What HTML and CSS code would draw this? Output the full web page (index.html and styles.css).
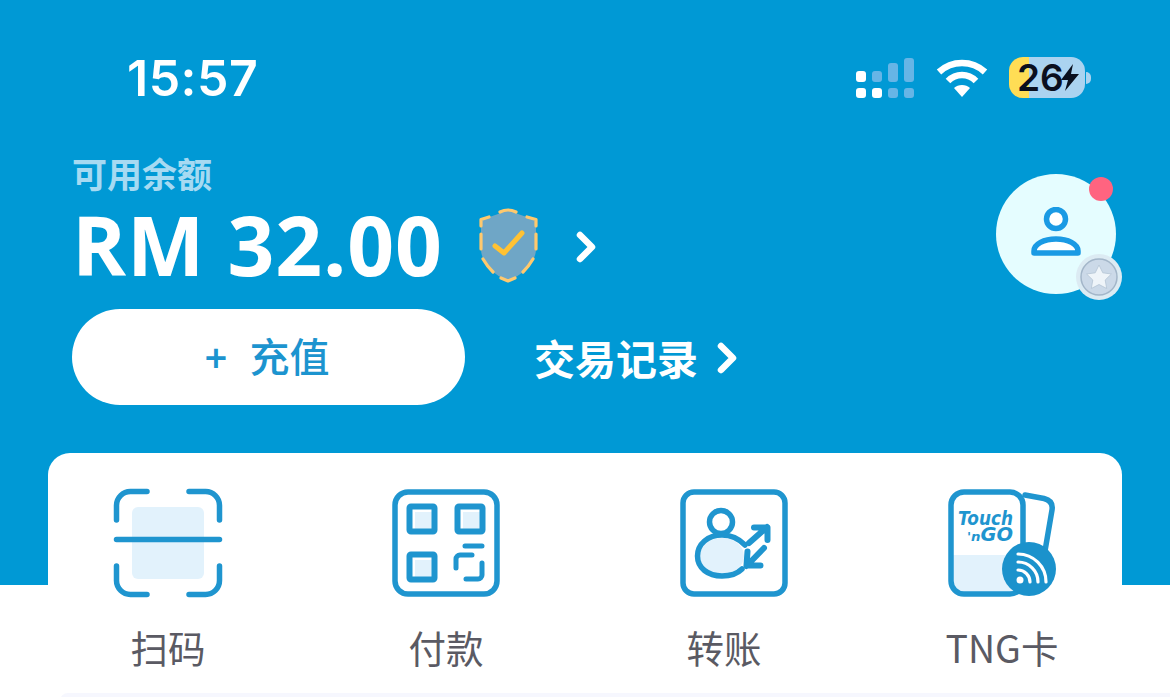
FILE: index.html
```html
<!DOCTYPE html>
<html lang="zh-CN">
<head>
<meta charset="utf-8">
<title>Wallet</title>
<link rel="stylesheet" href="styles.css">
</head>
<body>
<main class="page">
  <section class="hero">
    <div class="status">
      <span class="time">15:57</span>
      <div class="status-icons">
        <svg class="signal" viewBox="0 0 58 40" aria-hidden="true">
          <rect class="on" x="0" y="13" width="10" height="11" rx="3"/>
          <rect class="on" x="0" y="30" width="10" height="10" rx="3"/>
          <rect class="dim" x="16" y="13" width="10" height="11" rx="3"/>
          <rect class="on" x="16" y="30" width="10" height="10" rx="3"/>
          <rect class="dim" x="32" y="5" width="10" height="19" rx="3"/>
          <rect class="dim" x="32" y="30" width="10" height="10" rx="3"/>
          <rect class="dim" x="48" y="0" width="10" height="24" rx="3"/>
          <rect class="dim" x="48" y="30" width="10" height="10" rx="3"/>
        </svg>
        <svg class="wifi" viewBox="0 0 52 38" aria-hidden="true">
          <path d="M3 13C16 1 36 1 49 13" />
          <path d="M12 22C20 14 32 14 40 22" />
          <path class="wedge" d="M18 29C22 25 30 25 34 29L26 38Z"/>
        </svg>
        <div class="battery">
          <span class="battery-level">26</span>
          <svg class="bolt" viewBox="0 0 18 27" aria-hidden="true"><path d="M12 0 0 16H7L4 27 18 10H10Z"/></svg>
        </div>
        <span class="battery-nub"></span>
      </div>
    </div>

    <div class="summary">
      <div class="balance">
        <div class="balance-label">可用余额</div>
        <div class="balance-row">
          <span class="amount">RM 32.00</span>
          <svg class="shield" viewBox="0 0 60 78" aria-hidden="true">
            <path class="shield-fill" d="M30 3C24 7 13 11 3 13V43C3 57 16 69 30 75C44 69 58 57 58 43V13C47 11 36 7 30 3Z"/>
            <path class="shield-dash" d="M22 6Q30 2 38 6M11 11 3 13.500V20M49 11 58 13.500V20M3 28V43M58 28V43M5 53Q9 60 15 66M55 53Q51 60 45 66M23 72 30 75 37 72"/>
            <path class="shield-check" d="M17 40 26 47 44 27"/>
          </svg>
          <svg class="chevron chevron-balance" viewBox="0 0 20 32" aria-hidden="true"><path d="M4 4 16 16 4 28"/></svg>
        </div>
      </div>
      <div class="avatar">
        <svg class="person" viewBox="0 0 50 50" aria-hidden="true">
          <circle cx="25" cy="12" r="9.500"/>
          <path d="M3 46V44C3 37 13 32 25 32S47 37 47 44V46Z"/>
        </svg>
        <span class="notice"></span>
        <span class="medal">
          <svg viewBox="0 0 38 38" aria-hidden="true">
            <circle class="medal-disc" cx="19" cy="19" r="18"/>
            <path class="medal-star" d="M19 7 22.800 14.800 31.400 16 25.200 22 26.700 30.500 19 26.500 11.300 30.500 12.800 22 6.600 16 15.200 14.800Z"/>
          </svg>
        </span>
      </div>
    </div>

    <div class="actions">
      <button class="topup"><span class="plus">+</span>充值</button>
      <a class="history">交易记录
        <svg class="chevron" viewBox="0 0 20 32" aria-hidden="true"><path d="M4 4 16 16 4 28"/></svg>
      </a>
    </div>
  </section>

  <section class="card">
    <div class="tile">
      <svg class="tile-icon" viewBox="0 0 108 108" aria-hidden="true">
        <rect class="tint" x="18" y="18" width="72" height="72" rx="6"/>
        <path class="line" d="M2.500 31V17A14 14 0 0 1 17 2.500H33M75 2.500H91A14 14 0 0 1 105.500 17V31M2.500 77V91A14 14 0 0 0 17 105.500H33M75 105.500H91A14 14 0 0 0 105.500 91V77M2.500 50.500H105.500"/>
      </svg>
      <span class="tile-label">扫码</span>
    </div>
    <div class="tile">
      <svg class="tile-icon" viewBox="0 0 108 108" aria-hidden="true">
        <rect class="tint" x="23" y="23" width="20" height="20"/>
        <rect class="tint" x="71" y="23" width="20" height="20"/>
        <rect class="tint" x="23" y="71" width="20" height="20"/>
        <rect class="line" x="3" y="3" width="102" height="102" rx="13"/>
        <rect class="line line-square" x="17.500" y="17.500" width="25" height="25" rx="1.500"/>
        <rect class="line line-square" x="65.500" y="17.500" width="25" height="25" rx="1.500"/>
        <rect class="line line-square" x="17.500" y="65.500" width="25" height="25" rx="1.500"/>
        <path class="line line-thin" d="M73 57H90M64 79V70A4 4 0 0 1 68 66H80M90 74V86A4 4 0 0 1 86 90H74"/>
      </svg>
      <span class="tile-label">付款</span>
    </div>
    <div class="tile tile-transfer">
      <svg class="tile-icon" viewBox="0 0 108 108" aria-hidden="true">
        <ellipse class="tint" cx="42" cy="67" rx="22" ry="18"/>
        <rect class="line" x="3" y="3" width="102" height="102" rx="11"/>
        <circle class="line" cx="41" cy="33" r="11.500"/>
        <path class="line" d="M65 56C58 49 50 46 42 46C28 46 17.500 55 17.500 67C17.500 79 28 87 42 87C50 87 57 85 62 80"/>
        <path class="line line-arrow" d="M69 54 87 38M74 38.500H87.500V51M84 59 66.500 77M67.500 62.500 66.500 76.500H80.500"/>
      </svg>
      <span class="tile-label">转账</span>
    </div>
    <div class="tile">
      <svg class="tile-icon" viewBox="0 0 108 108" aria-hidden="true">
        <path class="tint" d="M3 66H75V92A13 13 0 0 1 62 105H16A13 13 0 0 1 3 92Z"/>
        <rect class="line" x="3" y="3" width="72" height="102" rx="13"/>
        <path class="line" d="M77 6 96 9.500C102 11 105 15 104 21L97 62"/>
        <text class="tng-text" x="10" y="36" textLength="55" lengthAdjust="spacingAndGlyphs">Touch</text>
        <text class="tng-text" x="19" y="51.500" textLength="46" lengthAdjust="spacingAndGlyphs"><tspan class="tng-small">'n</tspan>GO</text>
        <circle class="badge" cx="81" cy="80" r="27"/>
        <circle class="wifi-dot" cx="72" cy="91" r="3.500"/>
        <path class="wifi-arc" d="M70 73A20 20 0 0 1 90 93M70 81A12 12 0 0 1 82 93"/>
        <path class="wifi-arc" d="M70 65A28 28 0 0 1 98 93" />
      </svg>
      <span class="tile-label">TNG卡</span>
    </div>
  </section>
  <div class="next-strip"></div>
</main>
</body>
</html>
```

FILE: styles.css
```css
* { box-sizing: border-box; }

html, body {
  margin: 0;
  background: #fff;
}

.page {
  width: 1170px;
  height: 697px;
  overflow: hidden;
  background: #fff;
  font-family: "Noto Sans CJK SC", "Noto Sans", sans-serif;
}

.hero {
  height: 585px;
  padding-top: 54px;
  background: #0099d5;
  color: #fff;
}

.status {
  display: flex;
  align-items: center;
  justify-content: space-between;
  height: 48px;
  padding: 0 79px 0 127px;
}

.time {
  font: 600 50px/48px Inter, "Noto Sans", sans-serif;
  letter-spacing: 0.5px;
}

.status-icons {
  display: flex;
  align-items: center;
  margin-top: -1px;
}

.signal { width: 58px; height: 40px; }
.signal .on { fill: #fff; }
.signal .dim { fill: #66b5e6; }

.wifi {
  width: 52px;
  height: 38px;
  margin-left: 22px;
  fill: none;
}
.wifi path {
  stroke: #fff;
  stroke-width: 6.500;
}
.wifi .wedge {
  fill: #fff;
  stroke: none;
}

.battery {
  display: flex;
  align-items: center;
  width: 76px;
  height: 41px;
  margin-left: 21px;
  padding-left: 8px;
  border-radius: 14px;
  background: linear-gradient(90deg, #ffdd55 20px, #abd3f0 20px);
  color: #0a0f1e;
}

.battery-level {
  font: 600 37px/41px Inter, sans-serif;
}

.bolt {
  width: 18px;
  height: 27px;
  margin-left: -3px;
  fill: #0a0f1e;
}

.battery-nub {
  width: 5px;
  height: 12px;
  margin-left: 1px;
  border-radius: 0 6px 6px 0;
  background: #abd3f0;
}

.summary {
  display: flex;
  justify-content: space-between;
  align-items: flex-start;
  margin-top: 53px;
  padding: 0 54px 0 72px;
}

.balance-label {
  font-size: 35px;
  font-weight: 700;
  line-height: 36px;
  color: #a6daf2;
}

.balance-row {
  display: flex;
  align-items: center;
  height: 118px;
  padding-bottom: 12px;
}

.amount {
  font: 700 82px/100px "Open Sans", "Noto Sans", sans-serif;
  letter-spacing: 0.900px;
}

.shield {
  width: 60px;
  height: 78px;
  margin-left: 35px;
  margin-top: 2px;
}
.shield-fill { fill: #6fa6c6; }
.shield-dash {
  fill: none;
  stroke: #ffc96e;
  stroke-width: 3.200;
  stroke-linecap: round;
  stroke-linejoin: round;
}
.shield-check {
  fill: none;
  stroke: #ffc233;
  stroke-width: 5;
  stroke-linecap: round;
  stroke-linejoin: round;
}

.chevron {
  width: 20px;
  height: 32px;
  fill: none;
  stroke: #fff;
  stroke-width: 6.500;
  stroke-linecap: round;
  stroke-linejoin: round;
}

.chevron-balance {
  margin-top: 6px;
  margin-left: 38px;
}

.avatar {
  position: relative;
  display: flex;
  align-items: center;
  justify-content: center;
  width: 120px;
  height: 120px;
  margin-top: 19px;
  padding-bottom: 5px;
  border-radius: 50%;
  background: #e5fdff;
}

.person {
  width: 50px;
  height: 50px;
  fill: #fff;
  stroke: #1a9ae4;
  stroke-width: 5.500;
  stroke-linejoin: round;
}

.notice {
  position: absolute;
  top: 3px;
  right: 3px;
  width: 24px;
  height: 24px;
  border-radius: 50%;
  background: #ff6480;
}

.medal {
  position: absolute;
  right: -6px;
  bottom: -6px;
  display: flex;
  align-items: center;
  justify-content: center;
  width: 46px;
  height: 46px;
  border-radius: 50%;
  background: #dcebf3;
}
.medal svg { width: 38px; height: 38px; }
.medal-disc {
  fill: #cbd9e8;
  stroke: #a3b6c9;
  stroke-width: 1.500;
}
.medal-star { fill: #eef4f9; stroke: #b4c4d4; stroke-width: 0.800; }

.actions {
  display: flex;
  align-items: center;
  height: 96px;
  padding-left: 72px;
}

.topup {
  width: 393px;
  height: 96px;
  padding: 0 3px 2px 0;
  border: 0;
  border-radius: 48px;
  background: #fff;
  color: #1c94cf;
  font: 500 40px/1 "Noto Sans CJK SC", sans-serif;
}

.plus {
  margin-right: 22px;
  font-family: "Noto Sans", sans-serif;
  font-weight: 600;
}

.history {
  display: flex;
  align-items: center;
  gap: 19px;
  margin-left: 69px;
  font-size: 41px;
  font-weight: 700;
  line-height: 48px;
}

.history .chevron { margin-top: 2px; }

.card {
  display: grid;
  grid-template-columns: repeat(4, 120px);
  column-gap: 158px;
  align-content: start;
  height: 240px;
  margin: -132px 48px 0;
  padding: 36px 0 0 60px;
  border-radius: 22px 22px 0 0;
  background: #fff;
}

.tile {
  display: flex;
  flex-direction: column;
  align-items: center;
}

.tile-icon {
  width: 108px;
  height: 108px;
  flex: none;
  overflow: visible;
}

.tile-transfer .tile-icon { margin-left: 20px; }

.tile-label {
  margin-top: 26px;
  font-size: 37.500px;
  line-height: 48px;
  color: #5a5a63;
  white-space: nowrap;
}

.tint { fill: #e2f2fc; }

.line {
  fill: none;
  stroke: #1f95cf;
  stroke-width: 5.500;
  stroke-linecap: round;
  stroke-linejoin: round;
}
.line-square { stroke-width: 6; }
.line-thin { stroke-width: 5; }
.line-arrow { stroke-width: 6; }

.tng-text {
  font: italic 700 19px "DejaVu Sans", sans-serif;
  fill: #1f95cf;
}

.tng-small { font-size: 13px; }

.badge { fill: #1b92cc; }
.wifi-dot { fill: #fff; }
.wifi-arc {
  fill: none;
  stroke: #fff;
  stroke-width: 3.200;
  stroke-linecap: round;
}

.next-strip {
  height: 8px;
  margin: 0 0 0 60px;
  border-radius: 8px 0 0 0;
  background: #f6f7fe;
}
```
